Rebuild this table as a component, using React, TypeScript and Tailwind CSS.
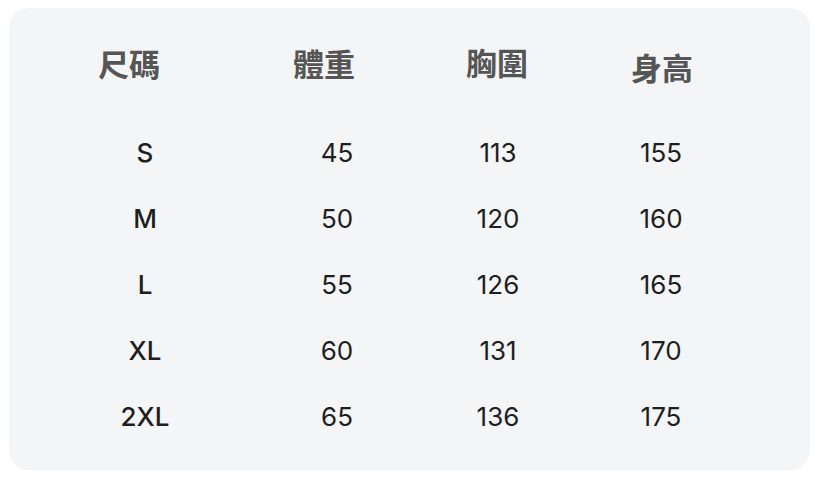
import React from "react";

const rows = [
  ["S", "45", "113", "155"],
  ["M", "50", "120", "160"],
  ["L", "55", "126", "165"],
  ["XL", "60", "131", "170"],
  ["2XL", "65", "136", "175"],
];

export default function App() {
  return (
    <div className="w-[824px] h-[484px] bg-white pt-[8px] pl-[9px]">
      <div className="w-[801px] h-[462px] rounded-[20px] bg-[#f4f5f7] pt-[35px]">
        <div
          className="flex h-[40px] items-center text-[31px] leading-[40px] font-semibold text-[#555555]"
          style={{ fontFamily: '"Noto Sans CJK TC", "Noto Sans CJK SC", sans-serif' }}
        >
          <div className="ml-[70px] w-[100px] text-center">尺碼</div>
          <div className="ml-[95px] w-[100px] text-center">體重</div>
          <div className="ml-[73px] w-[100px] text-center -mt-[2px]">胸圍</div>
          <div className="ml-[65px] w-[100px] text-center mt-[7px]">身高</div>
        </div>
        <div className="mt-[36px]" style={{ fontFamily: "Inter, sans-serif" }}>
          {rows.map((r) => (
            <div key={r[0]} className="flex h-[66px] items-center text-[26px] text-[#1e1e1e]">
              <div className="ml-[86px] w-[100px] text-center font-medium">{r[0]}</div>
              <div className="ml-[92px] w-[100px] text-center">{r[1]}</div>
              <div className="ml-[61px] w-[100px] text-center">{r[2]}</div>
              <div className="ml-[63px] w-[100px] text-center">{r[3]}</div>
            </div>
          ))}
        </div>
      </div>
    </div>
  );
}
